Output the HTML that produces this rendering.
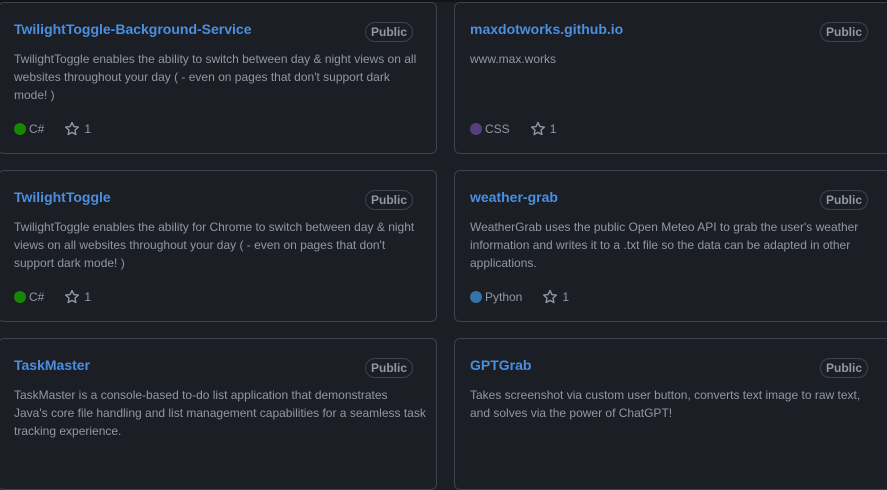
<!DOCTYPE html>
<html><head><meta charset="utf-8"><style>
html,body{margin:0;padding:0;width:887px;height:443px;overflow:hidden;background:#1b1e25;font-family:"Liberation Sans",sans-serif}
.top{position:absolute;left:0;top:0;width:887px;height:2px;background:#121418}
.card{position:absolute;width:439px;height:152px;border:1px solid #3d424b;border-radius:6px;background:#1b1e25;box-sizing:border-box}
.t{position:absolute;left:15px;top:18px;font-size:14px;font-weight:bold;color:#4a8fe0}
.b{position:absolute;right:23px;top:19px;height:18px;padding:0 5px;border:1px solid #3d424b;border-radius:10px;font-size:12px;font-weight:bold;color:#9198a1;line-height:18px}
.d{position:absolute;left:15px;top:47px;white-space:nowrap;font-size:12px;line-height:18px;color:#9198a1}
.f{position:absolute;left:15px;top:117px;font-size:12px;color:#9198a1;line-height:18px;display:flex;align-items:center}
.dot{display:inline-block;width:12px;height:12px;border-radius:50%;margin-right:3px}
.star{margin-left:20px;margin-right:4px}
</style></head><body>
<div class="top"></div>
<div class="card" style="left:-2px;top:2px"><div class="t">TwilightToggle-Background-Service</div><div class="b">Public</div><div class="d">TwilightToggle enables the ability to switch between day &amp; night views on all<br>websites throughout your day ( - even on pages that don't support dark<br>mode! )</div><div class="f"><span class="dot" style="background:#178600"></span>C#<svg class="star" width="16" height="16" viewBox="0 0 16 16"><path d="M8 1.5l1.9 4.1 4.4.5-3.3 3 .9 4.4L8 11.3l-3.9 2.2.9-4.4-3.3-3 4.4-.5z" fill="none" stroke="#9198a1" stroke-width="1.4" stroke-linejoin="round"/></svg>1</div></div>
<div class="card" style="left:454px;top:2px;width:440px"><div class="t">maxdotworks.github.io</div><div class="b" style="right:25px">Public</div><div class="d">www.max.works</div><div class="f"><span class="dot" style="background:#563d7c"></span>CSS<svg class="star" width="16" height="16" viewBox="0 0 16 16"><path d="M8 1.5l1.9 4.1 4.4.5-3.3 3 .9 4.4L8 11.3l-3.9 2.2.9-4.4-3.3-3 4.4-.5z" fill="none" stroke="#9198a1" stroke-width="1.4" stroke-linejoin="round"/></svg>1</div></div>
<div class="card" style="left:-2px;top:170px"><div class="t">TwilightToggle</div><div class="b">Public</div><div class="d">TwilightToggle enables the ability for Chrome to switch between day &amp; night<br>views on all websites throughout your day ( - even on pages that don't<br>support dark mode! )</div><div class="f"><span class="dot" style="background:#178600"></span>C#<svg class="star" width="16" height="16" viewBox="0 0 16 16"><path d="M8 1.5l1.9 4.1 4.4.5-3.3 3 .9 4.4L8 11.3l-3.9 2.2.9-4.4-3.3-3 4.4-.5z" fill="none" stroke="#9198a1" stroke-width="1.4" stroke-linejoin="round"/></svg>1</div></div>
<div class="card" style="left:454px;top:170px;width:440px"><div class="t">weather-grab</div><div class="b" style="right:25px">Public</div><div class="d">WeatherGrab uses the public Open Meteo API to grab the user's weather<br>information and writes it to a .txt file so the data can be adapted in other<br>applications.</div><div class="f"><span class="dot" style="background:#3572a5"></span>Python<svg class="star" width="16" height="16" viewBox="0 0 16 16"><path d="M8 1.5l1.9 4.1 4.4.5-3.3 3 .9 4.4L8 11.3l-3.9 2.2.9-4.4-3.3-3 4.4-.5z" fill="none" stroke="#9198a1" stroke-width="1.4" stroke-linejoin="round"/></svg>1</div></div>
<div class="card" style="left:-2px;top:338px"><div class="t">TaskMaster</div><div class="b">Public</div><div class="d">TaskMaster is a console-based to-do list application that demonstrates<br>Java's core file handling and list management capabilities for a seamless task<br>tracking experience.</div></div>
<div class="card" style="left:454px;top:338px;width:440px"><div class="t">GPTGrab</div><div class="b" style="right:25px">Public</div><div class="d">Takes screenshot via custom user button, converts text image to raw text,<br>and solves via the power of ChatGPT!</div></div>
</body></html>
